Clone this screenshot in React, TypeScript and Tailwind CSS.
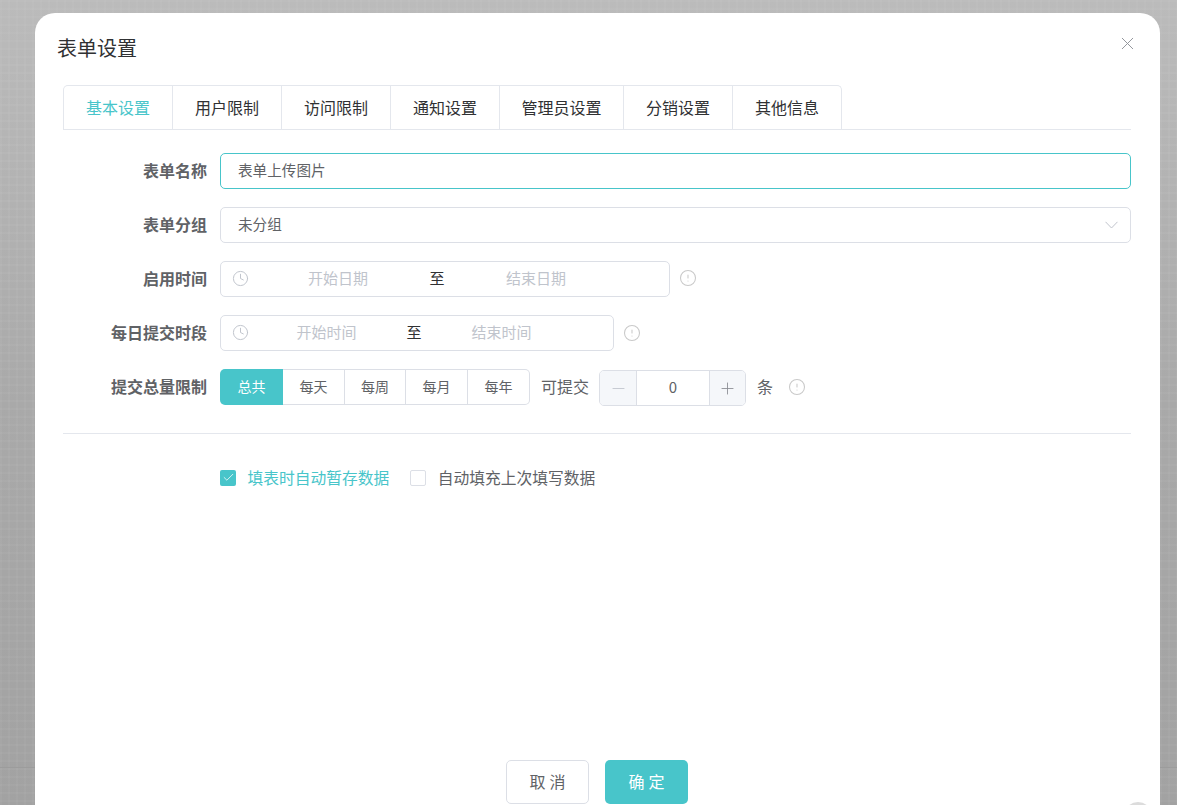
import { X, Clock, CircleAlert, Check, Minus, Plus } from "lucide-react";

const tabs = [
  { t: "基本设置", w: "w-[110px]", a: true },
  { t: "用户限制", w: "w-[109px]" },
  { t: "访问限制", w: "w-[109px]" },
  { t: "通知设置", w: "w-[109px]" },
  { t: "管理员设置", w: "w-[124px]" },
  { t: "分销设置", w: "w-[109px]" },
  { t: "其他信息", w: "w-[109px]" },
];

const segs = [
  { t: "总共", w: "w-[63px]" },
  { t: "每天", w: "w-[62px]" },
  { t: "每周", w: "w-[61px]" },
  { t: "每月", w: "w-[62px]" },
  { t: "每年", w: "w-[62px]" },
];

function Label({ children }: { children: string }) {
  return <div className="w-[144px] mr-[13px] pb-[2px] text-right text-[16px] font-bold text-[#606266] shrink-0">{children}</div>;
}

function Info() {
  return <CircleAlert size={18} strokeWidth={1.4} className="text-[#c9c9c9] shrink-0" />;
}

function Range({ outer, inner, start, end }: { outer: string; inner: string; start: string; end: string }) {
  return (
    <div className={`${outer} h-9 flex items-center border border-[#dcdfe6] rounded-[5px] pl-[11px] pb-[2px] shrink-0`}>
      <Clock size={17} strokeWidth={1.4} className="text-[#c0c4cc] shrink-0" />
      <div className={`${inner} text-center text-[15px] text-[#c0c4cc]`}>{start}</div>
      <div className="w-5 text-center text-[15px] text-[#303133]">至</div>
      <div className={`${inner} text-center text-[15px] text-[#c0c4cc]`}>{end}</div>
    </div>
  );
}

export default function App() {
  return (
    <div className="relative h-[805px] w-[1177px] overflow-hidden bg-[#ababab] bg-[linear-gradient(rgba(255,255,255,0.035)_2px,transparent_2px),linear-gradient(90deg,rgba(255,255,255,0.035)_2px,transparent_2px),linear-gradient(180deg,#bbbbbb,#a9a9a9_50%,#a2a2a2)] bg-[size:8px_8px,8px_8px,100%_100%] pt-[13px] pl-[35px] font-['Noto_Sans_CJK_SC','Liberation_Sans',sans-serif]">
      <div className="absolute left-0 right-0 top-[767px] h-px bg-[#9c9c9c]" />
      <div className="relative w-[1125px] rounded-[20px] bg-white pl-[28px] pr-[29px] pb-10">
        <div className="flex items-center h-[70px] -ml-[6px] text-[20px] leading-none text-[#303133]">表单设置</div>
        <X size={21} strokeWidth={1.1} className="absolute right-[22px] top-[20px] text-[#909399]" />

        <div className="mt-[2px] flex h-[45px] border-b border-[#e4e7ed]">
          {tabs.map((x, i) => (
            <div
              key={x.t}
              className={`${x.w} h-[45px] pb-[2px] flex items-center justify-center border-t border-r border-[#e4e7ed] text-[16px] ${i === 0 ? "border-l rounded-tl-[5px]" : ""} ${i === 6 ? "rounded-tr-[5px]" : ""} ${x.a ? "text-[#48c5ca]" : "text-[#303133]"}`}
            >
              {x.t}
            </div>
          ))}
        </div>

        <div className="mt-[23px] flex flex-col gap-[18px]">
          <div className="flex items-center">
            <Label>表单名称</Label>
            <div className="flex-1 h-9 flex items-center rounded-[5px] border border-[#48c5ca] pl-[17px] pb-[2px] text-[14.6px] text-[#606266]">表单上传图片</div>
          </div>
          <div className="flex items-center">
            <Label>表单分组</Label>
            <div className="flex-1 h-9 flex items-center justify-between rounded-[5px] border border-[#dcdfe6] pl-[17px] pr-[12px] pb-[2px] text-[14.6px] text-[#606266]">
              <span>未分组</span>
              <svg width="13" height="8" viewBox="0 0 13 8" fill="none" className="mt-[2px] text-[#c0c4cc]">
                <path d="M0.5 0.8 L6.5 7 L12.5 0.8" stroke="currentColor" strokeWidth="1" />
              </svg>
            </div>
          </div>
          <div className="flex items-center">
            <Label>启用时间</Label>
            <Range outer="w-[450px]" inner="w-[178px]" start="开始日期" end="结束日期" />
            <div className="ml-[9px] pb-[2px]"><Info /></div>
          </div>
          <div className="flex items-center">
            <Label>每日提交时段</Label>
            <Range outer="w-[394px]" inner="w-[155px]" start="开始时间" end="结束时间" />
            <div className="ml-[9px] pb-[1px]"><Info /></div>
          </div>
          <div className="flex items-center">
            <Label>提交总量限制</Label>
            <div className="flex h-9 w-[310px] shrink-0">
              {segs.map((s, i) => (
                <div
                  key={s.t}
                  className={`${s.w} flex items-center justify-center pb-[2px] text-[14px] ${i === 0 ? "rounded-l-[5px] bg-[#48c5ca] text-white" : "border-y border-r border-[#dcdfe6] text-[#606266]"} ${i === 4 ? "rounded-r-[5px]" : ""}`}
                >
                  {s.t}
                </div>
              ))}
            </div>
            <span className="ml-[11px] pb-[2px] text-[16px] text-[#606266]">可提交</span>
            <div className="ml-[10px] mt-px -mb-px flex h-9 w-[147px] overflow-hidden rounded-[5px] border border-[#dcdfe6] shrink-0">
              <div className="w-[37px] flex items-center justify-center border-r border-[#dcdfe6] bg-[#f5f7fa]">
                <Minus size={19} strokeWidth={1.1} className="text-[#c0c4cc]" />
              </div>
              <div className="flex-1 flex items-center justify-center pb-[1px] text-[15px] text-[#606266]">0</div>
              <div className="w-[36px] flex items-center justify-center border-l border-[#dcdfe6] bg-[#f5f7fa]">
                <Plus size={19} strokeWidth={1.1} className="text-[#8a8d93]" />
              </div>
            </div>
            <span className="ml-[11px] pb-[2px] text-[16px] text-[#606266]">条</span>
            <div className="ml-[15px]"><Info /></div>
          </div>
        </div>

        <div className="mt-[28px] h-px bg-[#e4e7ed]" />

        <div className="mt-[32px] ml-[157px] flex items-center">
          <div className="h-4 w-4 flex items-center justify-center rounded-[2px] bg-[#48c5ca]">
            <Check size={13} strokeWidth={1.4} className="text-white" />
          </div>
          <span className="ml-[11.5px] text-[15.75px] text-[#48c5ca]">填表时自动暂存数据</span>
          <div className="ml-[21px] h-4 w-4 rounded-[2px] border border-[#dcdfe6] bg-white" />
          <span className="ml-[11.5px] text-[15.75px] text-[#606266]">自动填充上次填写数据</span>
        </div>

        <div className="mt-[270px] flex justify-center gap-4">
          <div className="h-11 w-[83px] flex items-center justify-center rounded-[5px] border border-[#dcdfe6] pl-[4px] pb-[1px] text-[16px] tracking-[4px] text-[#606266]">取消</div>
          <div className="h-11 w-[83px] flex items-center justify-center rounded-[5px] bg-[#48c5ca] pl-[4px] pb-[1px] text-[16px] tracking-[4px] text-white">确定</div>
        </div>
      </div>
      <div className="absolute left-[1124px] top-[802px] h-7 w-7 rounded-full bg-[#dcdcdc]" />
    </div>
  );
}
